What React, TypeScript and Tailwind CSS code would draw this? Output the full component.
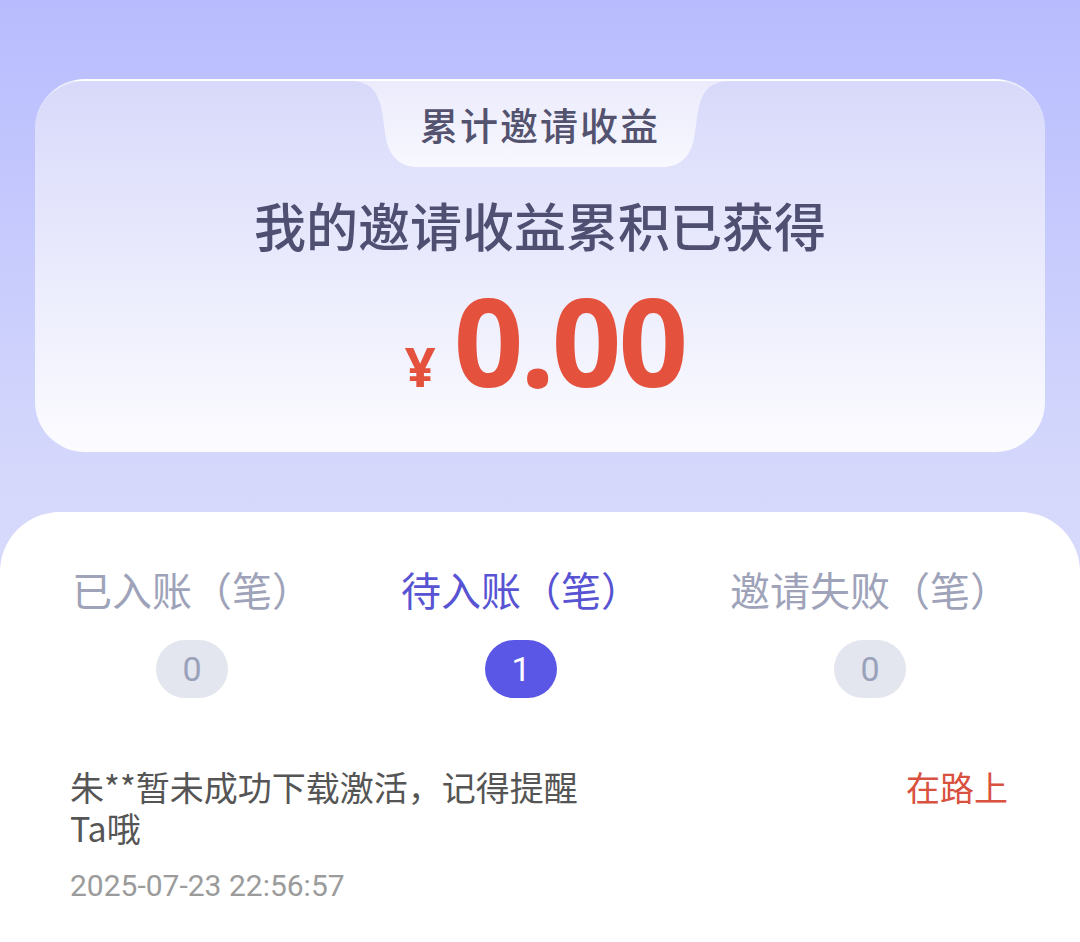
const tabs = [
  { label: '已入账（笔）', count: 0, active: false },
  { label: '待入账（笔）', count: 1, active: true },
  { label: '邀请失败（笔）', count: 0, active: false },
]

const cjk = { fontFamily: '"Noto Sans CJK SC", "Noto Sans", sans-serif' }

function TabShape() {
  return (
    <svg
      className="absolute top-0 left-1/2 -translate-x-1/2"
      width="380"
      height="86"
      viewBox="0 0 380 86"
      fill="none"
    >
      <defs>
        <linearGradient id="tabfill" x1="0" y1="0" x2="0" y2="1">
          <stop offset="0" stopColor="#ebebfc" />
          <stop offset="1" stopColor="#f8f8ff" />
        </linearGradient>
      </defs>
      <path
        d="M0 0 C20 0 28 10 32 30 L36 58 C40 76 50 86 68 86 L312 86 C330 86 340 76 344 58 L348 30 C352 10 360 0 380 0 Z"
        fill="url(#tabfill)"
      />
    </svg>
  )
}

export default function App() {
  return (
    <div
      className="min-h-[942px] w-full bg-gradient-to-b from-[#b8bcfe] via-[#d5d8fb] via-50% to-[#dde0fb] pt-[79px]"
      style={cjk}
    >
      {/* 累计收益卡片 */}
      <div className="mx-[35px] relative h-[373px] rounded-[50px] border-t-2 border-white/50 bg-gradient-to-b from-[#d8d9fa] to-[#fcfcff]">
        <TabShape />
        <div className="relative flex h-[86px] items-center justify-center">
          <span className="text-[38px] leading-none font-medium text-[#53526f] tracking-[2px]">累计邀请收益</span>
        </div>
        <div className="mt-[32px] text-center text-[52px] leading-none font-medium text-[#4e4f71]">
          我的邀请收益累积已获得
        </div>
        <div className="mt-[28px] flex items-baseline justify-center pl-[10px]">
          <span className="mr-[18px] text-[54px] font-bold leading-none text-[#e4513d]" style={{ fontFamily: '"Noto Sans", sans-serif' }}>
            ¥
          </span>
          <span
            className="text-[122px] font-bold leading-none text-[#e4513d] tracking-[-3px]"
            style={{ fontFamily: '"Noto Sans", sans-serif' }}
          >
            0.00
          </span>
        </div>
      </div>

      {/* 明细面板 */}
      <div className="mt-[60px] min-h-[430px] rounded-t-[60px] bg-white pt-[57px]">
        <div className="flex justify-between pl-[72px] pr-[70px]">
          {tabs.map((t) => (
            <div key={t.label} className="flex flex-col items-center">
              <span
                className={
                  t.active
                    ? 'text-[40px] leading-none text-[#5753d2]'
                    : 'text-[40px] leading-none text-[#9ea3b9]'
                }
              >
                {t.label}
              </span>
              <span
                className={
                  t.active
                    ? 'mt-[31px] flex h-[58px] w-[72px] items-center justify-center rounded-full bg-[#5b57e6] text-[34px] text-white'
                    : 'mt-[31px] flex h-[58px] w-[72px] items-center justify-center rounded-full bg-[#e3e6ee] text-[34px] text-[#9aa1ba]'
                }
                style={{ fontFamily: 'Roboto, sans-serif' }}
              >
                {t.count}
              </span>
            </div>
          ))}
        </div>

        <div className="mt-[68px] flex items-start justify-between pl-[70px] pr-[72px]">
          <div className="w-[540px]">
            <p className="text-[34px] leading-[41px] text-[#555555]">朱**暂未成功下载激活，记得提醒Ta哦</p>
            <p
              className="mt-[20px] text-[30px] leading-[36px] text-[#9b9b9b]"
              style={{ fontFamily: 'Roboto, sans-serif' }}
            >
              2025-07-23 22:56:57
            </p>
          </div>
          <span className="text-[34px] leading-[41px] text-[#d9513f]">在路上</span>
        </div>
      </div>
    </div>
  )
}
